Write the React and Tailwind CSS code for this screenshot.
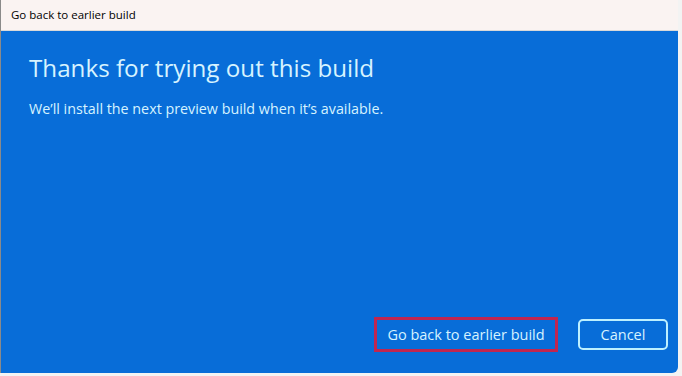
import React from "react";

export default function App() {
  return (
    <div className="w-[682px] h-[376px] bg-[#f3f3f3] font-['Open_Sans',sans-serif] overflow-hidden">
      <div className="w-[678px] h-[373px] flex flex-col border-l border-[#8a8a8a] rounded-br-[6px] overflow-hidden">
        <div className="h-[31px] bg-[#faf3f2] border-b border-[#d9d9d9] flex items-center pl-[10px] text-[11.5px] text-black">
          Go back to earlier build
        </div>
        <div className="flex-1 bg-[#086dd8] flex flex-col pl-[28px] pr-[10px] text-[#d6f3ff]">
          <h1 className="mt-[21px] text-[24.2px] leading-[32px] font-normal">
            Thanks for trying out this build
          </h1>
          <p className="mt-[15px] text-[14.3px] leading-[20px]">
            We’ll install the next preview build when it’s available.
          </p>
          <div className="mt-auto mb-[21px] flex justify-end items-center gap-[20px]">
            <div className="border-[3px] border-[#c02650] p-[1px]">
              <button className="h-[27px] w-[176px] text-[14.5px] text-[#d6f3ff] bg-[#086dd8]">
                Go back to earlier build
              </button>
            </div>
            <button className="h-[31px] w-[90px] border-2 border-[#bdf0ff] rounded-[5px] text-[14.5px] text-[#d6f3ff]">
              Cancel
            </button>
          </div>
        </div>
      </div>
    </div>
  );
}
